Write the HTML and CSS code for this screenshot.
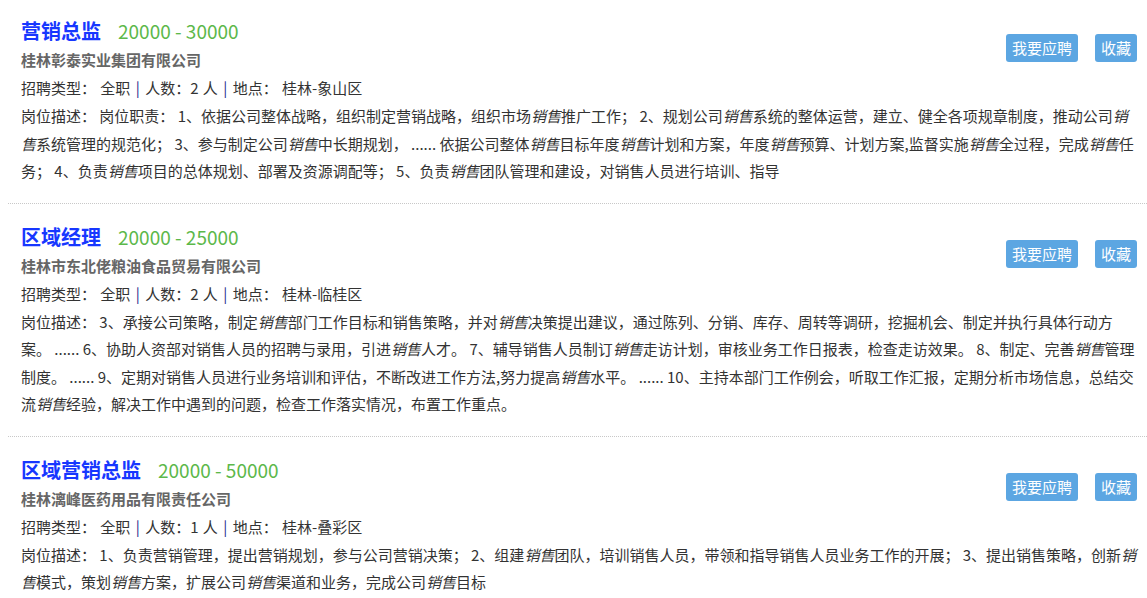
FILE: index.html
```html
<!DOCTYPE html>
<html lang="zh-CN">
<head>
<meta charset="utf-8">
<title>职位列表</title>
<link rel="stylesheet" href="styles.css">
</head>
<body>
<div class="list">
  <div class="job job-first">
    <div class="actions"><a class="btn">我要应聘</a><a class="btn">收藏</a></div>
    <div class="head"><a class="title">营销总监</a><span class="salary">20000 - 30000</span></div>
    <div class="company">桂林彰泰实业集团有限公司</div>
    <div class="info">招聘类型： 全职 <span class="sep">|</span> 人数：2 人 <span class="sep">|</span> 地点： 桂林-象山区</div>
    <div class="desc">岗位描述： 岗位职责： 1、依据公司整体战略，组织制定营销战略，组织市场<em>销售</em>推广工作； 2、规划公司<em>销售</em>系统的整体运营，建立、健全各项规章制度，推动公司<em>销售</em>系统管理的规范化； 3、参与制定公司<em>销售</em>中长期规划， ...... 依据公司整体<em>销售</em>目标年度<em>销售</em>计划和方案，年度<em>销售</em>预算、计划方案,监督实施<em>销售</em>全过程，完成<em>销售</em>任务； 4、负责<em>销售</em>项目的总体规划、部署及资源调配等； 5、负责<em>销售</em>团队管理和建设，对销售人员进行培训、指导</div>
  </div>
  <div class="job">
    <div class="actions"><a class="btn">我要应聘</a><a class="btn">收藏</a></div>
    <div class="head"><a class="title">区域经理</a><span class="salary">20000 - 25000</span></div>
    <div class="company">桂林市东北佬粮油食品贸易有限公司</div>
    <div class="info">招聘类型： 全职 <span class="sep">|</span> 人数：2 人 <span class="sep">|</span> 地点： 桂林-临桂区</div>
    <div class="desc">岗位描述： 3、承接公司策略，制定<em>销售</em>部门工作目标和销售策略，并对<em>销售</em>决策提出建议，通过陈列、分销、库存、周转等调研，挖掘机会、制定并执行具体行动方案。 ...... 6、协助人资部对销售人员的招聘与录用，引进<em>销售</em>人才。 7、辅导销售人员制订<em>销售</em>走访计划，审核业务工作日报表，检查走访效果。 8、制定、完善<em>销售</em>管理制度。 ...... 9、定期对销售人员进行业务培训和评估，不断改进工作方法,努力提高<em>销售</em>水平。 ...... 10、主持本部门工作例会，听取工作汇报，定期分析市场信息，总结交流<em>销售</em>经验，解决工作中遇到的问题，检查工作落实情况，布置工作重点。</div>
  </div>
  <div class="job">
    <div class="actions"><a class="btn">我要应聘</a><a class="btn">收藏</a></div>
    <div class="head"><a class="title">区域营销总监</a><span class="salary">20000 - 50000</span></div>
    <div class="company">桂林漓峰医药用品有限责任公司</div>
    <div class="info">招聘类型： 全职 <span class="sep">|</span> 人数：1 人 <span class="sep">|</span> 地点： 桂林-叠彩区</div>
    <div class="desc">岗位描述： 1、负责营销管理，提出营销规划，参与公司营销决策； 2、组建<em>销售</em>团队，培训销售人员，带领和指导销售人员业务工作的开展； 3、提出销售策略，创新<em>销售</em>模式，策划<em>销售</em>方案，扩展公司<em>销售</em>渠道和业务，完成公司<em>销售</em>目标</div>
  </div>
</div>
</body>
</html>
```

FILE: styles.css
```css
html, body {
  margin: 0;
  padding: 0;
  background: #fff;
}
body {
  font-family: "Noto Sans CJK SC", "Noto Sans", sans-serif;
  font-size: 15px;
  color: #333;
}
.list {
  margin-left: 8px;
}
.job {
  padding: 18px 10px 18px 13px;
  border-bottom: 1px dotted #c8c8c8;
}
.job-first {
  padding-top: 16px;
}
.actions {
  float: right;
  margin-top: 18px;
  display: flex;
  gap: 17px;
}
.btn {
  display: block;
  height: 28px;
  line-height: 28px;
  padding: 0 6px;
  background: #5ca6e2;
  color: #fff;
  border-radius: 3px;
  font-size: 15px;
  cursor: pointer;
}
.head {
  height: 30px;
  line-height: 30px;
  white-space: nowrap;
}
.title {
  font-size: 20px;
  font-weight: bold;
  color: #1737ff;
  cursor: pointer;
}
.salary {
  font-size: 19px;
  color: #5cb84a;
  margin-left: 17px;
}
.company {
  line-height: 28px;
  font-weight: bold;
  color: #666;
}
.info {
  line-height: 28px;
  color: #333;
  word-spacing: 1px;
}
.sep {
  color: #2a2a8a;
  margin: 0 1px;
}
.desc {
  line-height: 27.5px;
  color: #333;
}
.desc em {
  font-style: italic;
}
```
